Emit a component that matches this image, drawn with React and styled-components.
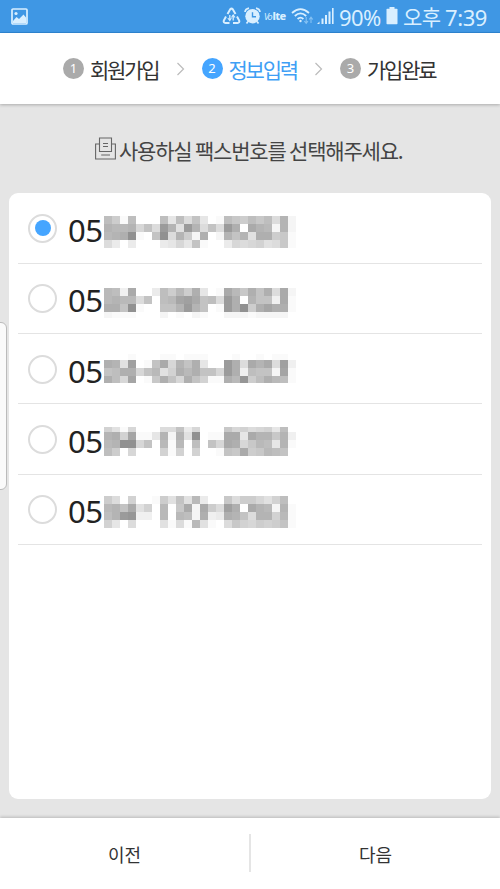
import React from 'react';
import styled, { createGlobalStyle } from 'styled-components';

// 데이터
const steps = [
    { no: 1, label: '회원가입', active: false },
    { no: 2, label: '정보입력', active: true },
    { no: 3, label: '가입완료', active: false },
];

// mask: 한 글자 = 8px 칸 하나 (a = 흰색, 뒤로 갈수록 진한 회색)
const numbers = [
    {
        prefix: '05', checked: true, top: 22.8, first: 8, last: 8,
        mask: ['nkbnaaanfnhmfabnlknlnhpc', 'poopimhupguphmhuqarpocpc', 'opqwbamwhpkcqacpmpgqqklb', 'heaeaaaefifmbaaeihijghlb'],
    },
    {
        prefix: '05', checked: false, top: 24.4, first: 8, last: 6,
        mask: ['ondraaenkokqfabrolqmqhrc', 'opoohmanostrmnhuqapmmdrb', 'qqmwbaammpupmabuqwkqsqqb', 'cbbbaaacabacbaacccbcccca'],
    },
    {
        prefix: '05', checked: false, top: 20, first: 6, last: 7,
        mask: ['aaabaaabbabbbaaabaababba', 'qpgtabmripmqfaauqhrprhtd', 'mnqqimogjqoqmmiuqdnmmcsb', 'qnisablqmiqmjbbqovknqonb'],
    },
    {
        prefix: '05', checked: false, top: 22.6, first: 5, last: 8,
        mask: ['jgbiaaahhmeiaaalijhijfna', 'pqjsbbfpcpgwabbrrfrpplpd', 'opwwimaoboanamirqilonfpb', 'nkaiaaajbjajaabmlrklonma'],
    },
    {
        prefix: '05', checked: false, top: 21.2, first: 8, last: 8,
        mask: ['khajaabkgmgoeaalhkkigjna', 'opmrgjaoalrcrkhtqarpocpb', 'npuvddaoaoncqdeqpmhppjob', 'jfahaaagbhbogbahljikjkmb'],
    },
];

const Mosaic = ({ mask, first, last }) => {
    const heights = [first, 8, 8, last];
    const tops = [0, first, first + 8, first + 16];
    return (
        <svg width="192" height={first + 16 + last} shapeRendering="crispEdges" aria-hidden="true">
            {mask.map((line, y) =>
                [...line].map((c, x) => {
                    const v = 255 - (c.charCodeAt(0) - 97) * 5;
                    return (
                        <rect key={`${x}-${y}`} x={x * 8} y={tops[y]} width="8" height={heights[y]} fill={`rgb(${v},${v},${v})`} />
                    );
                })
            )}
        </svg>
    );
};

const PictureIcon = () => (
    <svg width="17" height="17" viewBox="0 0 17 17">
        <rect x="1" y="1" width="15" height="15" rx="1" fill="none" stroke="#d9efff" strokeWidth="1.7" />
        <circle cx="5" cy="5.5" r="1.6" fill="#d9efff" />
        <path d="M2 13 L5.5 9 L8 11 L12.5 6.5 L15 9.5 V15 H2 Z" fill="#d9efff" />
    </svg>
);

const RecycleIcon = () => (
    <svg width="19" height="18" viewBox="0 0 19 18" fill="none" stroke="#d9efff" strokeWidth="2">
        <path d="M5.5 7 L8.2 2.3 Q9.5 1 10.8 2.3 L13.5 7" />
        <path d="M4 9.5 L1.8 13.5 Q1.2 15.8 3.5 16 H7.5" />
        <path d="M15 9.5 L17.2 13.5 Q17.8 15.8 15.5 16 H11" />
        <path d="M7.8 8 V13 M11.2 8.5 V13.5" strokeWidth="1.3" />
        <path d="M5.8 11 L7.8 13.5 L9.3 11 M9.5 10.5 L11.2 8 L13 10.5" strokeWidth="1.1" />
    </svg>
);

const AlarmIcon = () => (
    <svg width="17" height="18" viewBox="0 0 17 18">
        <path d="M1 5 Q1.3 2 5 1.2 M16 5 Q15.7 2 12 1.2 M4 14.5 L2.5 16.5 M13 14.5 L14.5 16.5" fill="none" stroke="#d9efff" strokeWidth="1.7" />
        <circle cx="8.5" cy="9.2" r="7.2" fill="#d9efff" />
        <path d="M8.5 5.2 V9.8 H12" fill="none" stroke="#3f97e4" strokeWidth="1.4" />
    </svg>
);

const WifiIcon = () => (
    <svg width="23" height="18" viewBox="0 0 23 18" fill="none" stroke="#d9efff">
        <path d="M1 6 Q9.5 -1.8 18 6" strokeWidth="1.8" />
        <path d="M3.8 9 Q9.5 3.8 15.2 9" strokeWidth="1.8" />
        <path d="M6.6 12 Q9.5 9.3 12.4 12" strokeWidth="1.8" />
        <circle cx="9.5" cy="14" r="1.2" fill="#d9efff" stroke="none" />
        <path d="M15.2 10 V16 M13.3 14 L15.2 16.3 L17 14" stroke="#85c2f3" strokeWidth="1.1" />
        <path d="M20 16 V10.5 M18.2 12.5 L20 10.2 L21.8 12.5" stroke="#85c2f3" strokeWidth="1.1" />
    </svg>
);

const SignalIcon = () => (
    <svg width="18" height="17" viewBox="0 0 18 17" fill="#d9efff">
        <path d="M0 16 L2.5 13.5 V16 Z" />
        <rect x="4.5" y="10.5" width="2" height="5.5" />
        <rect x="8" y="7" width="2" height="9" />
        <rect x="11.5" y="3.5" width="2" height="12.5" />
        <rect x="15" y="0" width="1.6" height="16" />
    </svg>
);

const BatteryIcon = () => (
    <svg width="12" height="18" viewBox="0 0 12 18" fill="#d9efff">
        <rect x="3.5" y="0" width="5" height="2.5" />
        <rect x="0.5" y="1.8" width="11" height="15.5" rx="0.8" />
    </svg>
);

const FaxIcon = () => (
    <svg width="21" height="23" viewBox="0 0 21 23" fill="none" stroke="#666" strokeWidth="1.1">
        <path d="M4.5 7 H0.6 V22 H20.4 V7 H16.5" />
        <path d="M4.5 14.5 V1 H16.5 V14.5 Z" />
        <path d="M8 6.5 H13 M8 9.5 H13 M6.2 18 H15" />
    </svg>
);

const App = () => {
    return (
        <Screen>
            <GlobalStyle />
            <StatusBar>
                <PictureIcon />
                <StatusRight>
                    <RecycleIcon />
                    <AlarmIcon />
                    <Lte><i>Vo</i>lte</Lte>
                    <WifiIcon />
                    <SignalIcon />
                    <StatusText $width={47} $gap={4} $spacing={-0.6}>90%</StatusText>
                    <BatteryIcon />
                    <StatusText $width={39} $size={21} $gap={5} $spacing={-0.6}>오후</StatusText>
                    <StatusText $width={44} $spacing={-0.4}>7:39</StatusText>
                </StatusRight>
            </StatusBar>

            <StepHeader>
                {steps.map((step, index) => (
                    <React.Fragment key={step.no}>
                        {index > 0 && (
                            <Chevron width="9" height="14" viewBox="0 0 9 14">
                                <path d="M1.5 1 L7.5 7 L1.5 13" fill="none" stroke="#bbb" strokeWidth="1.2" />
                            </Chevron>
                        )}
                        <Step>
                            <StepNo $active={step.active}>{step.no}</StepNo>
                            <StepLabel $active={step.active}>{step.label}</StepLabel>
                        </Step>
                    </React.Fragment>
                ))}
            </StepHeader>

            <Content>
                <Title>
                    <FaxIcon />
                    <TitleText>사용하실 팩스번호를 선택해주세요.</TitleText>
                </Title>
                <NumberList>
                    {numbers.map((item, index) => (
                        <NumberItem key={index}>
                            <Radio>{item.checked && <RadioDot />}</Radio>
                            <Prefix>{item.prefix}</Prefix>
                            <Masked $top={item.top}>
                                <Mosaic mask={item.mask} first={item.first} last={item.last} />
                            </Masked>
                        </NumberItem>
                    ))}
                </NumberList>
            </Content>

            <BottomBar>
                <BottomButton>이전</BottomButton>
                <Divider />
                <BottomButton>다음</BottomButton>
            </BottomBar>
            <EdgeHandle />
        </Screen>
    );
};

export default App;

// 스타일
const GlobalStyle = createGlobalStyle`
    * {
        box-sizing: border-box;
    }
    body {
        margin: 0;
        font-family: 'Noto Sans', 'Noto Sans CJK KR', sans-serif;
    }
    svg {
        display: block;
        flex-shrink: 0;
    }
`;

const Screen = styled.div`
    position: relative;
    display: flex;
    flex-direction: column;
    width: 500px;
    height: 889px;
    overflow: hidden;
    background-color: #e5e5e5;
`;

const StatusBar = styled.div`
    display: flex;
    align-items: center;
    justify-content: space-between;
    height: 33px;
    flex-shrink: 0;
    padding: 0 11px 0;
    background-color: #3f97e4;
    border-bottom: 1px solid #2e87d6;
`;

const StatusRight = styled.div`
    display: flex;
    align-items: center;
    svg + svg {
        margin-left: 3px;
    }
`;

const Lte = styled.span`
    width: 23px;
    margin: 0 4px 0 3px;
    color: #d9efff;
    font-size: 11px;
    font-weight: 800;
    line-height: 18px;
    letter-spacing: -0.6px;
    white-space: nowrap;
    i {
        font-size: 9px;
        font-weight: 400;
        letter-spacing: -1.2px;
        margin-right: 1px;
    }
`;

const StatusText = styled.span`
    width: ${({ $width }) => $width}px;
    margin-left: ${({ $gap }) => $gap || 3}px;
    color: #d9efff;
    font-family: 'Noto Sans', 'Noto Sans CJK KR', sans-serif;
    font-size: ${({ $size }) => $size || 22}px;
    font-weight: 400;
    line-height: 32px;
    padding-top: 2px;
    letter-spacing: ${({ $spacing }) => $spacing || 0}px;
    white-space: nowrap;
`;

const StepHeader = styled.div`
    position: relative;
    display: flex;
    align-items: center;
    height: 71px;
    flex-shrink: 0;
    padding-left: 63px;
    background-color: #fff;
    box-shadow: 0 1px 3px rgba(0, 0, 0, 0.25);
`;

const Step = styled.div`
    display: flex;
    align-items: center;
    width: 96px;
`;

const StepNo = styled.span`
    width: 21px;
    height: 21px;
    margin-right: 6px;
    border-radius: 50%;
    background-color: ${({ $active }) => ($active ? '#45a5ff' : '#aaa')};
    color: #fff;
    font-size: 13px;
    line-height: 21px;
    text-align: center;
    flex-shrink: 0;
`;

const StepLabel = styled.span`
    color: ${({ $active }) => ($active ? '#3f9ff5' : '#333')};
    font-family: 'Noto Sans CJK KR', sans-serif;
    font-size: 21px;
    line-height: 30px;
    letter-spacing: -2.2px;
    white-space: nowrap;
`;

const Chevron = styled.svg`
    margin: 0 17px 0 16.5px;
`;

const Content = styled.div`
    flex: 1;
    padding: 0 9px 19px;
    display: flex;
    flex-direction: column;
`;

const Title = styled.div`
    display: flex;
    align-items: center;
    height: 89px;
    padding-left: 86px;
`;

const TitleText = styled.span`
    margin-left: 3px;
    padding-top: 2px;
    color: #444;
    font-family: 'Noto Sans CJK KR', sans-serif;
    font-size: 21px;
    line-height: 30px;
    letter-spacing: -1.2px;
    white-space: nowrap;
`;

const NumberList = styled.ul`
    flex: 1;
    margin: 0;
    padding: 0.2px 9px 0;
    list-style: none;
    background-color: #fff;
    border-radius: 9px;
`;

const NumberItem = styled.li`
    display: flex;
    align-items: center;
    height: 70.4px;
    padding-left: 10px;
    border-bottom: 1px solid #e4e4e4;
`;

const Radio = styled.span`
    display: flex;
    align-items: center;
    justify-content: center;
    width: 29px;
    height: 29px;
    margin-top: 1px;
    border: 2px solid #dcdcdc;
    border-radius: 50%;
    flex-shrink: 0;
`;

const RadioDot = styled.span`
    width: 16px;
    height: 16px;
    border-radius: 50%;
    background-color: #45a5ff;
`;

const Prefix = styled.span`
    width: 36px;
    margin-left: 11px;
    padding-top: 4px;
    color: #222;
    font-size: 31px;
    line-height: 40px;
    letter-spacing: -0.4px;
`;

const Masked = styled.span`
    align-self: flex-start;
    padding-top: ${({ $top }) => $top}px;
`;

const BottomBar = styled.div`
    position: relative;
    display: flex;
    align-items: center;
    height: 71px;
    flex-shrink: 0;
    padding-bottom: 1px;
    background-color: #fff;
    box-shadow: 0 -1px 3px rgba(0, 0, 0, 0.2);
`;

const BottomButton = styled.button`
    flex: 1;
    padding: 2px 0 0;
    border: none;
    background: none;
    color: #333;
    font-family: 'Noto Sans CJK KR', sans-serif;
    font-size: 18px;
    line-height: 27px;
`;

const Divider = styled.span`
    width: 2px;
    height: 38px;
    background-color: #e5e5e5;
`;

// 화면 왼쪽 가장자리에 걸쳐 있는 엣지 패널 손잡이
const EdgeHandle = styled.div`
    position: absolute;
    top: 322px;
    left: -6px;
    width: 13px;
    height: 168px;
    border: 1px solid #bbb;
    border-radius: 6px;
    background-color: #fafafa;
`;
